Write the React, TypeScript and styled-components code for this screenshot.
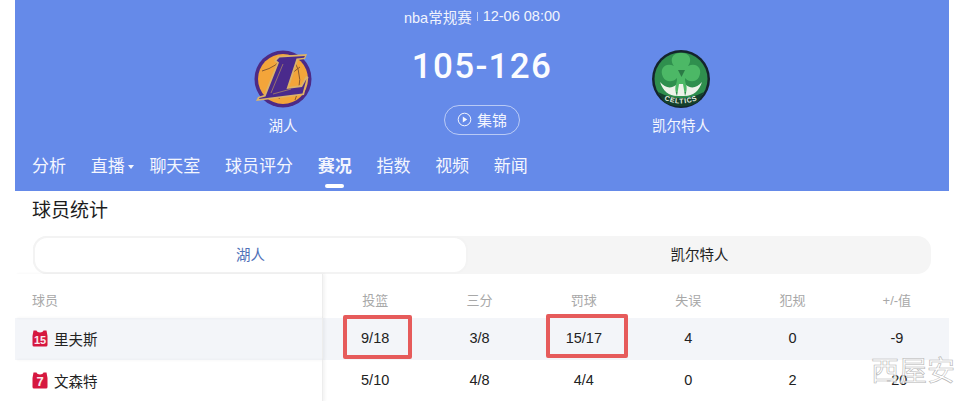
import React from "react";
import styled, { createGlobalStyle } from "styled-components";

const Global = createGlobalStyle`
  html, body { margin: 0; padding: 0; background: #fff; height: 401px; overflow: hidden; }
  #root { height: 401px; overflow: hidden; }
  * { box-sizing: border-box; }
`;

const FONT = `"Liberation Sans", "Noto Sans CJK SC", sans-serif`;

const Page = styled.div`
  position: relative;
  width: 969px;
  height: 401px;
  overflow: hidden;
  padding: 0 20px 0 15px;
  font-family: ${FONT};
`;

const Hero = styled.header`
  height: 191px;
  background: #658ae9;
  color: #fff;
  display: flex;
  flex-direction: column;
  align-items: center;
`;

const MetaLine = styled.div`
  height: 33px;
  padding-bottom: 1px;
  display: flex;
  align-items: center;
  gap: 5px;
  font-size: 14.5px;
  color: #f1f4fd;
`;

const MetaBar = styled.span`
  width: 1px;
  height: 9px;
  background: rgba(255, 255, 255, 0.6);
`;

const Match = styled.div`
  height: 112px;
  display: flex;
  justify-content: center;
`;

const Team = styled.div`
  width: 100px;
  padding-top: 16px;
  display: flex;
  flex-direction: column;
  align-items: center;
  font-size: 14.5px;
  line-height: 20px;
  gap: 7px;
  color: #f4f6fe;
`;

const Center = styled.div`
  width: 298px;
  display: flex;
  flex-direction: column;
  align-items: center;
`;

const Score = styled.div`
  margin-top: 12px;
  font-family: Roboto, sans-serif;
  font-weight: 500;
  font-size: 35px;
  line-height: 44px;
  letter-spacing: 1.3px;
  color: #fbfcff;
`;

const Highlights = styled.button`
  margin-top: 16px;
  width: 76px;
  height: 30px;
  border: 1px solid rgba(255, 255, 255, 0.55);
  border-radius: 15px;
  background: transparent;
  color: #f4f6fe;
  font: 15px ${FONT};
  display: flex;
  align-items: center;
  justify-content: center;
  gap: 5px;
  padding: 0 0 1px;
`;

const Nav = styled.nav`
  align-self: stretch;
  height: 46px;
  padding: 0 0 0 17px;
  display: flex;
  gap: 24.7px;
`;

const NavItem = styled.a<{ $active?: boolean }>`
  position: relative;
  height: 40px;
  line-height: 44px;
  font-size: 17px;
  color: #f4f6fe;
  font-weight: ${(p) => (p.$active ? 700 : 400)};
  &::after {
    content: "";
    display: ${(p) => (p.$active ? "block" : "none")};
    position: absolute;
    left: 7px;
    bottom: -3px;
    width: 19px;
    height: 4px;
    border-radius: 2px;
    background: #fff;
  }
`;

const Caret = styled.span`
  position: absolute;
  left: 37px;
  top: 20px;
  border-left: 3.5px solid transparent;
  border-right: 3.5px solid transparent;
  border-top: 4px solid #f4f6fe;
`;

const Body = styled.main``;

const SectionTitle = styled.h2`
  margin: 0;
  height: 40px;
  padding: 8px 0 0 17px;
  font-size: 19px;
  line-height: 24px;
  font-weight: 400;
  color: #1c1c1c;
`;

const Tabs = styled.div`
  margin: 5px 18px 0 18px;
  height: 38px;
  border-radius: 14px;
  background: #f5f5f5;
  display: flex;
`;

const Tab = styled.div<{ $active?: boolean }>`
  flex: ${(p) => (p.$active ? "0 0 435px" : "1 1 auto")};
  text-align: center;
  line-height: ${(p) => (p.$active ? "34px" : "38px")};
  font-size: 14.5px;
  border-radius: 14px;
  color: ${(p) => (p.$active ? "#5070b8" : "#222")};
  background: ${(p) => (p.$active ? "#fff" : "transparent")};
  border: ${(p) => (p.$active ? "2px solid #f3f3f3" : "none")};
`;

const Row = styled.div<{ $head?: boolean; $tint?: boolean }>`
  display: grid;
  grid-template-columns: 308px repeat(6, 1fr);
  height: ${(p) => (p.$head ? "44px" : "42px")};
  align-items: stretch;
  background: ${(p) => (p.$tint ? "#f3f5f9" : "transparent")};
  font-size: ${(p) => (p.$head ? "13px" : "14.5px")};
  color: ${(p) => (p.$head ? "#a8a8a8" : "#222")};
`;

const PlayerCell = styled.div`
  display: flex;
  align-items: center;
  gap: 6px;
  padding: 0 0 2px 17px;
  border-right: 1px solid #ededed;
  box-shadow: 2px 0 3px rgba(0, 0, 0, 0.05);
`;

const HeadPlayer = styled(PlayerCell)`
  padding: 6px 0 0 17px;
`;

const Cell = styled.div<{ $head?: boolean }>`
  position: relative;
  display: flex;
  align-items: center;
  justify-content: center;
  padding: ${(p) => (p.$head ? "6px 0 0" : "0 0 2px")};
`;

const Mark = styled.span<{ $left: number; $top: number; $width: number }>`
  position: absolute;
  left: ${(p) => p.$left}px;
  top: ${(p) => p.$top}px;
  width: ${(p) => p.$width}px;
  height: 44px;
  border: 4px solid #e65b5b;
  border-radius: 2px;
`;

const Watermark = styled.div`
  position: absolute;
  left: 871px;
  top: 350px;
  font-family: "Noto Sans CJK SC", sans-serif;
  font-size: 28px;
  line-height: 38px;
  color: rgba(255, 255, 255, 0.8);
  -webkit-text-stroke: 0.6px #b4b4b4;
`;

const LakersLogo = () => (
  <svg width="60" height="60" viewBox="0 0 60 60">
    <circle cx="30" cy="30" r="28.5" fill="#4d2a86" />
    <circle cx="30" cy="30" r="25" fill="#f3a53a" />
    <path d="M9 22 Q24 18 31 7 M41 11 Q52 30 42 51 M47 18 Q33 26 26 50" fill="none" stroke="#7a5030" strokeWidth="0.9" />
    <path d="M25 7 L54 5 L52 10 L45 11 L36 38 L48 36 L53 27 L55.500 28 L51 46 L3 52 L5 48 L11 46 L24 14 L21 12 Z" fill="#dcb368" />
    <path d="M26.500 8.500 L52 7 L51 8.800 L43.500 9.500 L33.500 40 L49 38 L53.500 30 L49.500 44.500 L6 50 L6.500 49 L12.500 47.500 L26 13.500 L23.500 11.500 Z" fill="#4a2a8c" />
    <path d="M30 15 L18 44 M38 40 L20 45" fill="none" stroke="#c9a25a" strokeWidth="0.6" />
  </svg>
);

const CelticsLogo = () => (
  <svg width="60" height="60" viewBox="0 0 60 60">
    <circle cx="30" cy="30" r="29" fill="#14242c" />
    <circle cx="30" cy="30" r="26.500" fill="#2f8f4e" />
    <path d="M30 4 C20 4 19 12 23 17 C14 13 8 20 12 28 C15 34 23 33 26 29 C26 36 23 40 20 43 L40 43 C37 40 34 36 34 29 C37 33 45 34 48 28 C52 20 46 13 37 17 C41 12 40 4 30 4 Z" fill="#4cb866" />
    <path d="M27 21 L34 21 L30.500 28 Z" fill="#2a7a45" />
    <path d="M9 33 C12 42 18 47 26 47 C24 42 24 38 25 36 C20 40 14 39 9 33 Z M51 33 C48 42 42 47 34 47 C36 42 36 38 35 36 C40 40 46 39 51 33 Z" fill="#eef3ea" />
    <path d="M28 35 L32 35 L34 47 L26 47 Z" fill="#eef3ea" />
    <path d="M7 43 Q30 55 53 43 L47 53 Q30 62 13 53 Z" fill="#14402c" />
    <path id="celticsArc" d="M10 49 Q30 60 50 49" fill="none" />
    <text fontFamily="Liberation Sans, sans-serif" fontWeight="700" fontSize="7" letterSpacing="0.8" fill="#e7efe2">
      <textPath href="#celticsArc" startOffset="50%" textAnchor="middle">CELTICS</textPath>
    </text>
  </svg>
);

const PlayIcon = () => (
  <svg width="15" height="15" viewBox="0 0 15 15">
    <circle cx="7.5" cy="7.5" r="6.3" fill="none" stroke="#f4f6fe" strokeWidth="1" />
    <path d="M5.8 4.6 L10.2 7.5 L5.8 10.4 Z" fill="#f4f6fe" />
  </svg>
);

const Jersey = ({ no }: { no: string }) => (
  <svg width="16" height="17" viewBox="0 0 16 17">
    <path d="M1.5 0.5 H4.5 C5 3 11 3 11.5 0.5 H14.5 L15.500 6 V15 Q15.500 16.500 14 16.500 H2 Q0.5 16.500 0.5 15 V6 Z" fill="#d6173f" />
    <text x="8" y="13.500" textAnchor="middle" fontFamily="Liberation Sans, sans-serif" fontWeight="700" fontSize={no.length > 1 ? 11 : 13} fill="#fbe9ee">{no}</text>
  </svg>
);

const navItems = ["分析", "直播", "聊天室", "球员评分", "赛况", "指数", "视频", "新闻"];
const heads = ["投篮", "三分", "罚球", "失误", "犯规", "+/-值"];

const players = [
  { name: "里夫斯", no: "15", stats: ["9/18", "3/8", "15/17", "4", "0", "-9"] },
  { name: "文森特", no: "7", stats: ["5/10", "4/8", "4/4", "0", "2", "-20"] },
];

const marks: Record<number, { left: number; top: number; width: number }> = {
  0: { left: 20, top: -3, width: 69 },
  2: { left: 14, top: -4, width: 82 },
};

export default function App() {
  return (
    <Page>
      <Global />
      <Hero>
        <MetaLine>
          <span>nba常规赛</span>
          <MetaBar />
          <span>12-06 08:00</span>
        </MetaLine>
        <Match>
          <Team>
            <LakersLogo />
            <span>湖人</span>
          </Team>
          <Center>
            <Score>105-126</Score>
            <Highlights>
              <PlayIcon />
              集锦
            </Highlights>
          </Center>
          <Team>
            <CelticsLogo />
            <span>凯尔特人</span>
          </Team>
        </Match>
        <Nav>
          {navItems.map((n) => (
            <NavItem key={n} $active={n === "赛况"}>
              {n}
              {n === "直播" && <Caret />}
            </NavItem>
          ))}
        </Nav>
      </Hero>
      <Body>
        <SectionTitle>球员统计</SectionTitle>
        <Tabs>
          <Tab $active>湖人</Tab>
          <Tab>凯尔特人</Tab>
        </Tabs>
        <Row $head>
          <HeadPlayer>球员</HeadPlayer>
          {heads.map((h) => (
            <Cell $head key={h}>{h}</Cell>
          ))}
        </Row>
        {players.map((p, i) => (
          <Row key={p.name} $tint={i === 0}>
            <PlayerCell>
              <Jersey no={p.no} />
              {p.name}
            </PlayerCell>
            {p.stats.map((s, j) => (
              <Cell key={j}>
                {s}
                {i === 0 && marks[j] && <Mark $left={marks[j].left} $top={marks[j].top} $width={marks[j].width} />}
              </Cell>
            ))}
          </Row>
        ))}
      </Body>
      <Watermark>西屋安</Watermark>
    </Page>
  );
}
